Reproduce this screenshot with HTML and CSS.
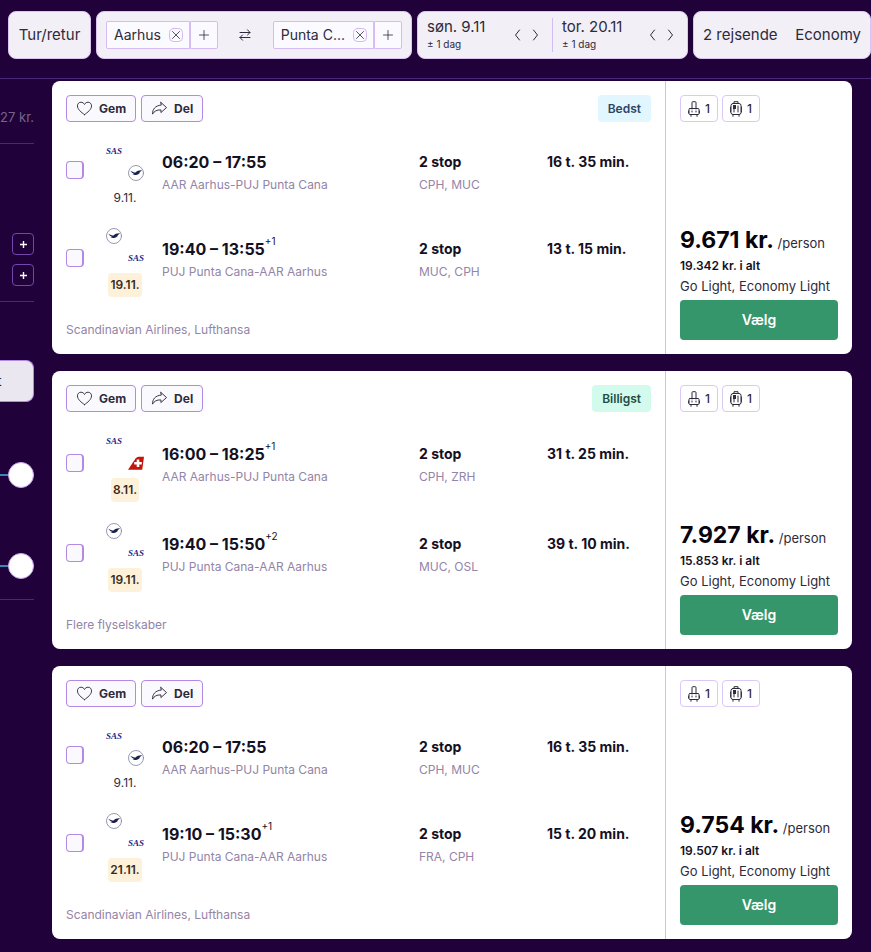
FILE: index.html
```
<!DOCTYPE html>
<html lang="da">
<head>
<meta charset="utf-8">
<meta name="viewport" content="width=device-width, initial-scale=1">
<title>Flyrejser Aarhus – Punta Cana</title>
<link rel="stylesheet" href="styles.css">
</head>
<body>
<svg class="sprite" aria-hidden="true">
  <symbol id="heart" viewBox="0 0 18 16"><path d="M9 14.5C5.500 12 1.500 9 1.500 5.200C1.500 2.800 3.200 1.300 5.200 1.300C6.900 1.300 8.200 2.200 9 3.700C9.800 2.200 11.100 1.300 12.800 1.300C14.800 1.300 16.500 2.800 16.500 5.200C16.500 9 12.500 12 9 14.500Z"/></symbol>
  <symbol id="share" viewBox="0 0 18 16"><path d="M10.500 1.500L16.500 7L10.500 12.300V9.500C6 9.300 3.500 10.800 1.500 14C1.500 8.800 4.500 4.800 10.500 4.400Z"/></symbol>
  <symbol id="close" viewBox="0 0 14 14"><rect class="close-box" x=".5" y=".5" width="13" height="13" rx="4"/><path d="M3.500 3.500L10.500 10.500M10.500 3.500L3.500 10.500"/></symbol>
  <symbol id="plus" viewBox="0 0 10 10"><path d="M5 .5V9.500M.5 5H9.500"/></symbol>
  <symbol id="swap" viewBox="0 0 12 12"><path d="M1 3.500H11M8.500 .8L11 3.500L8.500 6M11 8.500H1M3.500 6L1 8.500L3.500 11.200"/></symbol>
  <symbol id="prev" viewBox="0 0 7 12"><path d="M5.500 1L1.500 6L5.500 11"/></symbol>
  <symbol id="next" viewBox="0 0 7 12"><path d="M1.500 1L5.500 6L1.500 11"/></symbol>
  <symbol id="trolley" viewBox="0 0 12 16"><path d="M4 8V1.500Q4 .7 5 .7H7Q8 .7 8 1.500V8M2 7.500H10Q11 7.500 11 8.500V12.500Q11 13.500 10 13.500H2Q1 13.500 1 12.500V8.500Q1 7.500 2 7.500ZM3 13.500V15.300M9 13.500V15.300M.4 10V12M11.600 10V12M4 10V11M8 10V11"/></symbol>
  <symbol id="suitcase" viewBox="0 0 12 16"><path d="M4 2.500V.7H8V2.500M3 2.500H9Q11 2.500 11 4.500V11.500Q11 13.500 9 13.500H3Q1 13.500 1 11.500V4.500Q1 2.500 3 2.500ZM3 13.500V15.300M9 13.500V15.300M4 5V11M8 5V11M.4 6V11M11.600 6V11"/><path class="solid" d="M3 4H6V8H3Z"/></symbol>
  <symbol id="crane" viewBox="0 0 16 16"><circle cx="8" cy="8" r="7.500" fill="#fff" stroke="#7c809e" stroke-width=".8"/><path fill="#19204f" d="M2.300 5.800C4.300 6.800 6 7.600 7.500 7.600C9 5.800 11.500 5.200 14.200 5.400L12 6.200L13.400 6.600L11.300 7.300L12 7.800C10.800 9 9 10.300 7.300 9.900L4.300 9.500L6.300 8.900C4.700 8.500 3.300 7.300 2.300 5.800Z"/></symbol>
  <symbol id="swiss" viewBox="0 0 18 16"><path fill="#c1170d" d="M0 15.500L8.500 3Q10 1 12 1H18L16 15.500Z"/><path fill="#fff" d="M9.800 4H12.700V6.800H15.500V9.700H12.700V12.500H9.800V9.700H7V6.800H9.800Z"/></symbol>
</svg>

<header class="search">
  <button class="field trip">Tur/retur</button>
  <div class="field route">
    <div class="place"><span class="city">Aarhus <button aria-label="Fjern Aarhus"><svg class="i14"><use href="#close"/></svg></button></span><button class="add" aria-label="Tilføj afrejsested"><svg class="i10"><use href="#plus"/></svg></button></div>
    <button class="swap" aria-label="Byt om"><svg class="i12"><use href="#swap"/></svg></button>
    <div class="place"><span class="city">Punta C... <button aria-label="Fjern Punta Cana"><svg class="i14"><use href="#close"/></svg></button></span><button class="add" aria-label="Tilføj destination"><svg class="i10"><use href="#plus"/></svg></button></div>
  </div>
  <div class="field dates">
    <div class="date"><button class="day">søn. 9.11<small>± 1 dag</small></button><span class="steps"><button aria-label="Dagen før"><svg><use href="#prev"/></svg></button><button aria-label="Dagen efter"><svg><use href="#next"/></svg></button></span></div>
    <div class="date"><button class="day">tor. 20.11<small>± 1 dag</small></button><span class="steps"><button aria-label="Dagen før"><svg><use href="#prev"/></svg></button><button aria-label="Dagen efter"><svg><use href="#next"/></svg></button></span></div>
  </div>
  <button class="field guests"><span>2 rejsende</span><span>Economy</span></button>
</header>

<div class="page">
  <aside class="filters">
    <section class="price-filter">27 kr.</section>
    <section class="bags">
      <button class="more" aria-label="Flere håndbagager"><svg><use href="#plus"/></svg></button>
      <button class="more" aria-label="Flere kufferter"><svg><use href="#plus"/></svg></button>
    </section>
    <section class="times">
      <button class="tab">t</button>
      <input class="range" type="range" aria-label="Afrejse" value="100">
      <input class="range" type="range" aria-label="Hjemrejse" value="100">
    </section>
  </aside>

  <main class="results">
    <article class="card">
      <div class="trip-info">
        <div class="actions"><button class="action"><svg><use href="#heart"/></svg>Gem</button><button class="action"><svg><use href="#share"/></svg>Del</button><span class="badge best">Bedst</span></div>
        <div class="leg">
          <input type="checkbox" aria-label="Vælg udrejse 06:20">
          <div class="carriers"><div class="logos"><i class="sas">SAS</i><svg><use href="#crane"/></svg></div><span class="on">9.11.</span></div>
          <div><strong class="time">06:20 – 17:55</strong><p>AAR Aarhus-PUJ Punta Cana</p></div>
          <div><strong>2 stop</strong><p>CPH, MUC</p></div>
          <div><strong>16 t. 35 min.</strong><p>&nbsp;</p></div>
        </div>
        <div class="leg">
          <input type="checkbox" aria-label="Vælg hjemrejse 19:40">
          <div class="carriers"><div class="logos"><svg><use href="#crane"/></svg><i class="sas">SAS</i></div><span class="on other">19.11.</span></div>
          <div><strong class="time">19:40 – 13:55<sup>+1</sup></strong><p>PUJ Punta Cana-AAR Aarhus</p></div>
          <div><strong>2 stop</strong><p>MUC, CPH</p></div>
          <div><strong>13 t. 15 min.</strong><p>&nbsp;</p></div>
        </div>
        <p class="airlines">Scandinavian Airlines, Lufthansa</p>
      </div>
      <div class="offer">
        <div class="luggage"><button><svg><use href="#trolley"/></svg>1</button><button><svg><use href="#suitcase"/></svg>1</button></div>
        <div class="price"><strong>9.671 kr.</strong> /person</div>
        <div class="total">19.342 kr. i alt</div>
        <div class="fare">Go Light, Economy Light</div>
        <button class="select">Vælg</button>
      </div>
    </article>

    <article class="card">
      <div class="trip-info">
        <div class="actions"><button class="action"><svg><use href="#heart"/></svg>Gem</button><button class="action"><svg><use href="#share"/></svg>Del</button><span class="badge cheap">Billigst</span></div>
        <div class="leg">
          <input type="checkbox" aria-label="Vælg udrejse 16:00">
          <div class="carriers"><div class="logos"><i class="sas">SAS</i><svg><use href="#swiss"/></svg></div><span class="on other">8.11.</span></div>
          <div><strong class="time">16:00 – 18:25<sup>+1</sup></strong><p>AAR Aarhus-PUJ Punta Cana</p></div>
          <div><strong>2 stop</strong><p>CPH, ZRH</p></div>
          <div><strong>31 t. 25 min.</strong><p>&nbsp;</p></div>
        </div>
        <div class="leg">
          <input type="checkbox" aria-label="Vælg hjemrejse 19:40">
          <div class="carriers"><div class="logos"><svg><use href="#crane"/></svg><i class="sas">SAS</i></div><span class="on other">19.11.</span></div>
          <div><strong class="time">19:40 – 15:50<sup>+2</sup></strong><p>PUJ Punta Cana-AAR Aarhus</p></div>
          <div><strong>2 stop</strong><p>MUC, OSL</p></div>
          <div><strong>39 t. 10 min.</strong><p>&nbsp;</p></div>
        </div>
        <p class="airlines">Flere flyselskaber</p>
      </div>
      <div class="offer">
        <div class="luggage"><button><svg><use href="#trolley"/></svg>1</button><button><svg><use href="#suitcase"/></svg>1</button></div>
        <div class="price"><strong>7.927 kr.</strong> /person</div>
        <div class="total">15.853 kr. i alt</div>
        <div class="fare">Go Light, Economy Light</div>
        <button class="select">Vælg</button>
      </div>
    </article>

    <article class="card">
      <div class="trip-info">
        <div class="actions"><button class="action"><svg><use href="#heart"/></svg>Gem</button><button class="action"><svg><use href="#share"/></svg>Del</button></div>
        <div class="leg">
          <input type="checkbox" aria-label="Vælg udrejse 06:20">
          <div class="carriers"><div class="logos"><i class="sas">SAS</i><svg><use href="#crane"/></svg></div><span class="on">9.11.</span></div>
          <div><strong class="time">06:20 – 17:55</strong><p>AAR Aarhus-PUJ Punta Cana</p></div>
          <div><strong>2 stop</strong><p>CPH, MUC</p></div>
          <div><strong>16 t. 35 min.</strong><p>&nbsp;</p></div>
        </div>
        <div class="leg">
          <input type="checkbox" aria-label="Vælg hjemrejse 19:10">
          <div class="carriers"><div class="logos"><svg><use href="#crane"/></svg><i class="sas">SAS</i></div><span class="on other">21.11.</span></div>
          <div><strong class="time">19:10 – 15:30<sup>+1</sup></strong><p>PUJ Punta Cana-AAR Aarhus</p></div>
          <div><strong>2 stop</strong><p>FRA, CPH</p></div>
          <div><strong>15 t. 20 min.</strong><p>&nbsp;</p></div>
        </div>
        <p class="airlines">Scandinavian Airlines, Lufthansa</p>
      </div>
      <div class="offer">
        <div class="luggage"><button><svg><use href="#trolley"/></svg>1</button><button><svg><use href="#suitcase"/></svg>1</button></div>
        <div class="price"><strong>9.754 kr.</strong> /person</div>
        <div class="total">19.507 kr. i alt</div>
        <div class="fare">Go Light, Economy Light</div>
        <button class="select">Vælg</button>
      </div>
    </article>
  </main>
</div>
</body>
</html>
```
FILE: styles.css
```
* { box-sizing: border-box; }
body { margin: 0; background: #210139; color: #2d2a3b; font: 12px/16px Inter, "Liberation Sans", sans-serif; }
button { margin: 0; padding: 0; border: 0; background: none; color: inherit; font: inherit; cursor: pointer; }
p { margin: 0; }
svg { display: block; fill: none; stroke: currentColor; stroke-linecap: round; stroke-linejoin: round; }
.sprite { position: absolute; width: 0; height: 0; }
.i10 { width: 10px; height: 10px; }
.i12 { width: 12px; height: 12px; }
.i14 { width: 14px; height: 14px; }
.close-box { stroke: #c9a8f0; }
.solid { fill: currentColor; stroke: none; }

.search { display: flex; gap: 5px; padding: 11px 0 19px 8px; border-bottom: 1px solid #49277a; font-size: 15px; line-height: 20px; white-space: nowrap; }
.field { display: flex; align-items: center; height: 48px; min-width: 0; border: 1px solid #d9c4f2; border-radius: 8px; background: #f2eff6; }
.trip { flex: 83 1 83px; justify-content: center; }
.route { flex: 316 1 316px; justify-content: space-between; padding: 0 9px; }
.dates { flex: 271 1 271px; padding: 0 9px; }
.guests { flex: 178 1 178px; justify-content: space-between; padding: 0 9px; }
.place { display: flex; }
.city { display: flex; align-items: center; gap: 8px; height: 28px; padding: 0 6px 0 7px; border: 1px solid #d5bcf3; border-radius: 2px 0 0 2px; background: #fbfaff; font-size: 14px; }
.city svg, .add svg { stroke-width: .8; }
.add { display: grid; place-items: center; width: 28px; height: 28px; border: 1px solid #d5bcf3; border-radius: 0 2px 2px 0; background: #fbfaff; }
.date { display: flex; flex: 1; align-items: center; justify-content: space-between; padding-right: 13px; }
.date + .date { padding-left: 9px; padding-right: 4px; border-left: 1px solid #d5bcf3; }
.day { font-size: 15px; line-height: 18px; text-align: left; }
.day small { display: block; font-size: 10px; line-height: 16px; }
.steps { display: flex; gap: 11px; }
.steps svg { width: 7px; height: 12px; }

.page { display: flex; gap: 18px; padding: 2px 19px 13px 0; }
.filters { display: flex; flex: none; flex-direction: column; width: 34px; }
.filters section { display: flex; flex-direction: column; align-items: flex-end; border-bottom: 1px solid #49277a; }
.price-filter { padding: 27px 0 17px; color: #77658b; font-size: 13px; line-height: 18px; white-space: nowrap; }
.bags { gap: 9px; padding: 89px 0 15px; }
.more { display: grid; place-items: center; width: 22px; height: 22px; border: 1px solid #7445ad; border-radius: 4px; color: #fff; }
.more svg { width: 7px; height: 7px; stroke-width: 2; }
.times { padding: 58px 0 20px; }
.tab { width: 100%; height: 42px; border: 1px solid #b489e6; border-left: 0; border-radius: 0 8px 8px 0; background: #ebe7f1; font-size: 14px; text-align: left; text-indent: -3px; }
.range { width: 100%; height: 26px; margin: 60px 0 0; appearance: none; background: linear-gradient(#3587b9, #3587b9) center / 100% 2px no-repeat; }
.range + .range { margin-top: 65px; }
.range::-webkit-slider-thumb { appearance: none; width: 26px; height: 26px; border: 1px solid #c9a8f0; border-radius: 50%; background: #fff; }

.results { display: flex; flex: 1; flex-direction: column; gap: 17px; min-width: 0; }
.card { display: flex; border-radius: 8px; background: #fff; }
.trip-info { flex: 1; min-width: 0; padding: 14px 14px 16px; }
.actions { display: flex; gap: 5px; }
.action { display: flex; align-items: center; gap: 6px; height: 27px; padding: 0 9px; border: 1px solid #b489e6; border-radius: 4px; background: #faf9fd; font-weight: 700; }
.action svg { width: 17px; height: 15px; }
.badge { margin-left: auto; padding: 0 10px; border-radius: 4px; font-weight: 600; line-height: 27px; }
.best { background: #e1f6ff; color: #294764; }
.cheap { background: #d2fbed; color: #1d4d45; }
.leg { display: grid; grid-template-columns: 40px 56px 257fr 128fr 104fr; align-items: center; margin-top: 21px; }
.leg > :not(.carriers) { margin-bottom: 5px; }
.leg > input { width: 18px; height: 18px; margin: 0; appearance: none; border: 1px solid #b489e6; border-right-width: 2px; border-radius: 4px; background: #faf9fd; }
.leg > input:not(.carriers) { margin-bottom: 10px; }
.carriers { width: 38px; }
.logos { display: grid; grid-template-columns: 16px 16px; gap: 6px; height: 38px; }
.logos > :last-child { grid-area: 2 / 2; }
.logos svg { width: 16px; height: 16px; stroke: none; }
.sas { color: #20258a; font: italic bold 9px/16px "Liberation Serif", serif; }
.on { display: block; width: max-content; margin: 7px auto 0; line-height: 19px; }
.other { padding: 0 2px; border-radius: 4px; background: #fdf2d9; color: #3a2a1d; font-weight: 600; line-height: 24px; }
.leg strong { display: block; color: #14101f; font-size: 14px; font-weight: 700; line-height: 24px; }
.leg .time { font-size: 16px; }
.leg sup { font-size: 10px; font-weight: 400; line-height: 1px; vertical-align: 10px; }
.leg p, .airlines { color: #9384a8; }
.leg p { line-height: 22px; }
.airlines { margin-top: 25px; }

.offer { display: flex; flex: 0 0 187px; flex-direction: column; padding: 14px; border-left: 1px solid #d5bcf3; white-space: nowrap; }
.luggage { display: flex; gap: 4px; margin-bottom: auto; }
.luggage button { display: flex; align-items: center; justify-content: center; gap: 5px; width: 38px; height: 27px; border: 1px solid #dcc8f5; border-radius: 4px; font-weight: 500; }
.luggage svg { width: 12px; height: 16px; }
.price strong { color: #07040d; font-size: 23px; line-height: 32px; }
.price { font-size: 13px; }
.total { color: #14101f; font-size: 12px; font-weight: 600; line-height: 20px; }
.fare { font-size: 13px; line-height: 20px; }
.select { height: 40px; margin-top: 4px; border-radius: 4px; background: #35966c; color: #fff; font-size: 14px; font-weight: 600; }
```
